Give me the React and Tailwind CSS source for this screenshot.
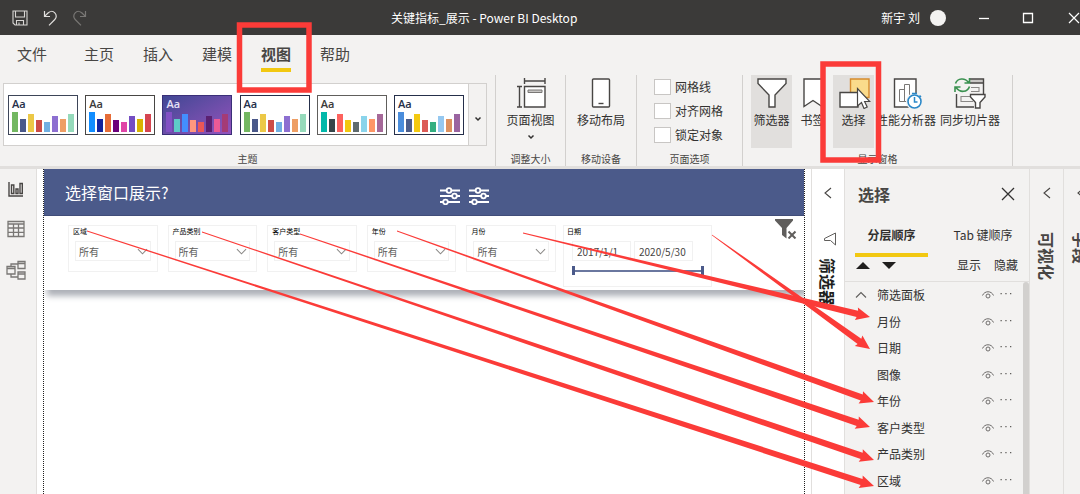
import { useState } from 'react';

const tabs = ['主页', '插入', '建模', '视图', '帮助'];

const themes = [
    { frame: 'border-[#3d4558] bg-white', text: 'text-[#252f4a]', bars: ['#73b761', '#4a588a', '#ecc846', '#cd4c46', '#71afe2', '#8d6fd1', '#ee9e64', '#95dabb'] },
    { frame: 'border-[#484644] bg-white', text: 'text-[#3b3a39]', bars: ['#118dff', '#12239e', '#e66c37', '#6b007b', '#e044a7', '#744ec2', '#d9b300', '#d64550'] },
    { frame: 'border-[#3a2f78] bg-linear-to-br from-[#3f4794] to-[#9452bd]', text: 'text-[#e6e0f5]', bars: ['#8250c4', '#5ecbc8', '#438fff', '#ff977e', '#eb5757', '#5b2071', '#ec5a96', '#a43b76'] },
    { frame: 'border-[#252f4a] bg-white', text: 'text-[#252f4a]', bars: ['#73b761', '#4a588a', '#ecc846', '#cd4c46', '#71afe2', '#8d6fd1', '#ee9e64', '#95dabb'] },
    { frame: 'border-[#605e5c] bg-white', text: 'text-[#3b3a39]', bars: ['#01b8aa', '#374649', '#fd625e', '#f2c80f', '#5f6b6d', '#8ad4eb', '#fe9666', '#a66999'] },
    { frame: 'border-[#252f4a] bg-white', text: 'text-[#252f4a]', bars: ['#4a8ddc', '#4c5d8a', '#f3c911', '#dc5b57', '#33ae81', '#95c8f0', '#dd915f', '#9a64a0'] },
];

const barHeights = [20, 13, 18, 12, 10, 16, 13, 18];

const slicers = ['区域', '产品类别', '客户类型', '年份', '月份'];

const layers = ['月份', '日期', '图像', '年份', '客户类型', '产品类别', '区域'];

const arrows = [
    [87, 231, 874, 486],
    [202, 232, 874, 460],
    [300, 234, 870, 427],
    [397, 231, 874, 402],
    [523, 233, 870, 317],
    [712, 235, 870, 349],
];

// tapered arrow: thin tail, wide shaft end, triangular head
const arrowPoints = ([x1, y1, x2, y2]) => {
    const length = Math.hypot(x2 - x1, y2 - y1);
    const ux = (x2 - x1) / length;
    const uy = (y2 - y1) / length;
    const at = (distance, side) =>
        `${(x1 + ux * distance - uy * side).toFixed(1)},${(y1 + uy * distance + ux * side).toFixed(1)}`;
    const neck = length - 13;
    return [at(0, -0.4), at(neck, -3.2), at(neck - 1, -6.5), at(length, 0), at(neck - 1, 6.5), at(neck, 3.2), at(0, 0.4)].join(' ');
};

const Chevron = ({ d, className }) => (
    <svg viewBox="0 0 12 12" className={className} fill="none" stroke="currentColor" strokeWidth="1.1">
        <path d={d} />
    </svg>
);

const LEFT = 'M9 1L3 6l6 5';
const DOWN = 'M1 3.5l5 5 5-5';
const UP = 'M1 8.5l5-5 5 5';

const TitleBar = () => (
    <header className="flex h-[35px] shrink-0 items-center bg-[#3b3a39] text-xs text-white">
        <div className="flex w-[391px] items-center gap-[14px] pl-3">
            <button aria-label="保存">
                <svg viewBox="0 0 16 16" className="size-4" fill="none" stroke="#d8d6d4" strokeWidth="1.1">
                    <path d="M1 1h14v14H3l-2-2zM3.500 1v6h9V1M4.500 15v-4.500h7V15M7 12.500V15" />
                </svg>
            </button>
            <button aria-label="撤消">
                <svg viewBox="0 0 16 16" className="size-4" fill="none" stroke="#e1dfdd" strokeWidth="1.2">
                    <path d="M2.500 1v5.500H8M2.800 6.200L6 3c2-2 5-2 6.800-.2 1.900 1.900 1.900 4.800 0 6.700L7 15.300" />
                </svg>
            </button>
            <button aria-label="恢复">
                <svg viewBox="0 0 16 16" className="size-4" fill="none" stroke="#797775" strokeWidth="1.2">
                    <path d="M13.500 1v5.500H8M13.200 6.200L10 3C8 1 5 1 3.200 2.800c-1.900 1.900-1.900 4.800 0 6.700L9 15.300" />
                </svg>
            </button>
        </div>
        <h1>关键指标_展示 - Power BI Desktop</h1>
        <div className="ml-auto flex items-center">
            <span>新宇 刘</span>
            <span className="ml-[10px] size-4 rounded-full bg-[#f3f2f1]" />
            <button aria-label="最小化" className="ml-8">
                <svg viewBox="0 0 12 12" className="size-3" stroke="white" strokeWidth="1.3"><path d="M1 6.500h10" /></svg>
            </button>
            <button aria-label="最大化" className="ml-8">
                <svg viewBox="0 0 12 12" className="size-3" fill="none" stroke="white" strokeWidth="1.300"><path d="M1.500 1.500h9v9h-9z" /></svg>
            </button>
            <button aria-label="关闭" className="ml-[34px]">
                <svg viewBox="0 0 12 12" className="size-3" stroke="white" strokeWidth="1.200"><path d="M1 1l10 10M11 1L1 11" /></svg>
            </button>
        </div>
    </header>
);

const ThemeCard = ({ theme }) => (
    <button aria-label="主题" className={`flex h-10 w-[70px] flex-col items-start justify-between border px-[3px] pb-[3px] ${theme.frame}`}>
        <span className={`font-['Open_Sans'] text-[11px] leading-4 font-semibold ${theme.text}`}>Aa</span>
        <span className="flex h-5 w-full items-end justify-between">
            {theme.bars.map((color, i) => (
                <span key={i} className="w-[6px]" style={{ height: barHeights[i], background: color }} />
            ))}
        </span>
    </button>
);

const Group = ({ label, className, children }) => (
    <section className={`flex shrink-0 flex-col border-r border-[#d2d0ce] ${className}`}>
        <div className="flex flex-1">{children}</div>
        <p className="h-[14px] text-center text-[10px] leading-[14px] text-[#484644]">{label}</p>
    </section>
);

const SmallChevron = ({ className }) => (
    <svg viewBox="0 0 8 8" className={`size-2 ${className}`} fill="none" stroke="currentColor" strokeWidth="1.5">
        <path d="M1.500 2.500L4 5l2.500-2.500" />
    </svg>
);

const RibbonButton = ({ icon, label, dropdown, className }) => (
    <button className={`flex h-[73px] shrink-0 flex-col items-center pt-[2px] text-xs whitespace-nowrap text-[#323130] ${className}`}>
        <svg viewBox="0 0 34 32" className="h-8 w-[34px]" fill="white" stroke="#484644" strokeWidth="1.4">{icon}</svg>
        <span className="mt-[2px] leading-[18px]">{label}</span>
        {dropdown && <SmallChevron className="mt-1" />}
    </button>
);

const icons = {
    pageView: (
        <>
            <path d="M10.500 9.500h20.500v20.500h-20.500z" />
            <path d="M14 13h14v2.500H14z" fill="#c8c6c4" stroke="#797775" strokeWidth="1" />
            <path d="M10.500 4h20.500M10.500 1v6M31 1v6M5.500 9.500V30M3 9.500h5M3 30h5" fill="none" />
        </>
    ),
    mobile: (
        <>
            <rect x="8.500" y="2" width="17" height="28" rx="1" />
            <path d="M14.500 26.500h5" />
        </>
    ),
    filter: <path d="M3 2h28v4.500L20 18v12h-6V18L3 6.500z" />,
    bookmark: <path d="M8 2h18v27.500l-9-6-9 6z" />,
    selection: (
        <>
            <path d="M13.500 2H32v18.500H13.500z" fill="#fadb8b" stroke="#d68c2e" />
            <path d="M3 15.500h18v14.500H3z" />
            <path d="M20.500 11.500v17.500l4-3.500 2.500 6 3.200-1.500-2.600-5.500h5.200z" strokeWidth="1.200" />
        </>
    ),
    performance: (
        <>
            <path d="M5.500 2h21.500v28H5.500z" />
            <path d="M10.500 12.500h5v12h-5zM15.500 7.500h5v17h-5z" strokeWidth="1" stroke="#797775" />
            <circle cx="25.500" cy="24.500" r="8.500" fill="#f3f2f1" stroke="none" />
            <circle cx="25.500" cy="24.500" r="6.500" stroke="#2b88c8" strokeWidth="1.600" />
            <path d="M23 16.500h5M25.500 20v5h3M30.500 18.500l1.500 1.500" fill="none" stroke="#2b88c8" strokeWidth="1.500" />
        </>
    ),
    sync: (
        <>
            <path d="M18 2h12.500v16H3.500V30H21" fill="none" stroke="none" />
            <path d="M17 2.500h13V6H17z" fill="#c8c6c4" stroke="none" />
            <path d="M16.500 2h14v16M17 6h13.500M3.500 17v13H21" fill="none" />
            <path d="M18 10.500h8v4H18M19 19.500H8v5h12" fill="none" stroke="#8a8886" strokeWidth="1.100" />
            <path d="M17.500 17.500h14.500v2.500l-5 5.500V31h-4.500v-5.500l-5-5.500z" />
            <g fill="none" stroke="#3a9150" strokeWidth="1.600">
                <path d="M2.500 6.500C4.500 1 12 .5 15.500 5.500M16.500 1v5h-5M16.500 9.500C14.500 15.500 7 16 3 10.500M2 15V10h5.500" />
            </g>
        </>
    ),
};

const Ribbon = () => (
    <div className="flex h-[91px] shrink-0">
        <Group label="主题" className="w-[496px]">
            <div className="mt-2 ml-[3px] flex h-[63px] w-[484px] border border-[#d2d0ce] bg-white">
                <div className="flex flex-1 items-center justify-between px-1">
                    {themes.map((theme, i) => <ThemeCard key={i} theme={theme} />)}
                </div>
                <button aria-label="更多主题" className="flex w-[18px] items-center justify-center border-l border-[#d2d0ce] bg-[#f3f2f1] text-[#323130]">
                    <SmallChevron className="mt-2" />
                </button>
            </div>
        </Group>
        <Group label="调整大小" className="w-[70px]">
            <RibbonButton icon={icons.pageView} label="页面视图" dropdown className="w-full" />
        </Group>
        <Group label="移动设备" className="w-[71px]">
            <RibbonButton icon={icons.mobile} label="移动布局" className="w-full" />
        </Group>
        <Group label="页面选项" className="w-[106px]">
            <div className="flex flex-col gap-2 pt-1 pl-[17px]">
                {['网格线', '对齐网格', '锁定对象'].map((name) => (
                    <label key={name} className="flex items-center gap-1 text-xs leading-4 text-[#323130]">
                        <input type="checkbox" className="h-4 w-[17px] appearance-none border border-[#c8c6c4] bg-white checked:bg-[#605e5c]" />
                        {name}
                    </label>
                ))}
            </div>
        </Group>
        <Group label="显示窗格" className="w-[270px]">
            <div className="flex pl-2">
                <RibbonButton icon={icons.filter} label="筛选器" className="w-[41px] bg-[#e1dfdd]" />
                <RibbonButton icon={icons.bookmark} label="书签" className="w-[41px]" />
                <RibbonButton icon={icons.selection} label="选择" className="w-[41px] bg-[#e1dfdd]" />
                <RibbonButton icon={icons.performance} label="性能分析器" className="w-16" />
                <RibbonButton icon={icons.sync} label="同步切片器" className="w-16" />
            </div>
        </Group>
    </div>
);

const ViewRail = () => (
    <nav className="flex w-[37px] shrink-0 flex-col items-center gap-[22px] border-r border-[#e1dfdd] bg-[#f3f2f1] pt-[11px] pr-1">
        <button aria-label="报表">
            <svg viewBox="0 0 18 18" className="size-[18px]" fill="none" stroke="#484644" strokeWidth="1.400">
                <path d="M2 2v14h14M4.500 5h2.300v8.500H4.500zM9 9h2v4.500H9zM13 3.500h2.300v10H13z" />
            </svg>
        </button>
        <button aria-label="数据">
            <svg viewBox="0 0 18 18" className="size-[18px]" fill="none" stroke="#797775" strokeWidth="1.300">
                <path d="M1 1.500h16v15H1zM1 4h16M1 8h16M1 12.300h16M6.500 4v12.500M11.500 4v12.500" />
            </svg>
        </button>
        <button aria-label="模型">
            <svg viewBox="0 0 20 20" className="size-5" fill="none" stroke="#797775" strokeWidth="1.300">
                <path d="M1 6.500h8v7.500H1zM1 8.500h8M12 1.500h7v7h-7zM12 3.500h7M12 12h7v7h-7zM12 14h7M5 6.500V4h7M5 14v3h7" />
            </svg>
        </button>
    </nav>
);

const Slicer = ({ label }) => (
    <label className="flex h-[47px] flex-col border border-[#f1f1f1] px-1">
        <span className="h-[15px] text-[7px] leading-[11px] text-black">{label}</span>
        <span className="relative mx-[2px] block h-5 border border-[#f1f1f1]">
            <select className="block h-full w-full appearance-none bg-transparent pl-[3px] text-[10px] text-[#605e5c]">
                <option>所有</option>
            </select>
            <Chevron d={DOWN} className="pointer-events-none absolute top-1 right-[2px] size-[11px] text-[#8a8886]" />
        </span>
    </label>
);

const sliderClass =
    'pointer-events-none absolute inset-0 h-[9px] w-full appearance-none bg-transparent [&::-webkit-slider-thumb]:h-[9px] [&::-webkit-slider-thumb]:w-[3px] [&::-webkit-slider-thumb]:appearance-none [&::-webkit-slider-thumb]:bg-[#4b5a8a]';

const dateClass = 'h-5 w-[59px] border border-[#f1f1f1] px-1 text-[10px] text-[#484644]';

const DateSlicer = () => (
    <fieldset className="h-[62px] w-[149px] border border-[#f1f1f1] px-[3px]">
        <div className="h-[15px] text-[7px] leading-[11px] text-black">日期</div>
        <div className="flex gap-[3px] pl-[5px]">
            <input aria-label="开始日期" defaultValue="2017/1/1" className={dateClass} />
            <input aria-label="结束日期" defaultValue="2020/5/30" className={dateClass} />
        </div>
        <div className="relative mt-[5px] ml-[5px] flex h-[9px] w-[132px] items-center">
            <div className="h-[2px] w-full bg-[#6a779f]" />
            <input type="range" aria-label="最早" defaultValue="0" className={sliderClass} />
            <input type="range" aria-label="最晚" defaultValue="100" className={sliderClass} />
        </div>
    </fieldset>
);

const SlidersIcon = () => (
    <svg viewBox="0 0 20 18" className="h-[18px] w-5" fill="#4b5a8a" stroke="white" strokeWidth="1.800">
        <path d="M0 3.500h20M0 9h20M0 15h20" />
        <circle cx="9" cy="3.500" r="2.300" />
        <circle cx="14.500" cy="9" r="2.300" />
        <circle cx="5.500" cy="15" r="2.300" />
    </svg>
);

const Canvas = () => (
    <main className="flex min-w-0 flex-1 bg-white px-[6px]">
        <div className="flex-1 overflow-hidden border-x border-dotted border-[#201f1e]">
            <div className="flex h-[47px] items-center border-b border-[#3f4c78] bg-[#4b5a8a] pl-[21px] text-white">
                <h2 className="w-[375px] text-base">选择窗口展示?</h2>
                <div className="flex gap-[9px] pt-2">
                    <button aria-label="显示筛选"><SlidersIcon /></button>
                    <button aria-label="隐藏筛选"><SlidersIcon /></button>
                </div>
            </div>
            <div className="flex h-[74px] items-start bg-white pt-[9px] pl-6 shadow-[3px_6px_6px_#aeb1b8]">
                <div className="grid w-[488px] shrink-0 grid-cols-5 gap-[10px]">
                    {slicers.map((name) => <Slicer key={name} label={name} />)}
                </div>
                <div className="ml-[7px] shrink-0"><DateSlicer /></div>
                <button aria-label="清除筛选" className="-mt-[6px] mr-[7px] ml-auto">
                    <svg viewBox="0 0 22 20" className="h-5 w-[22px]">
                        <path d="M0 0h18v1.500L11.500 9v10.500L7 16V9L0 1.500z" fill="#605e5c" />
                        <path d="M13.500 12.500l7 7M20.500 12.500l-7 7" stroke="#605e5c" strokeWidth="2" />
                    </svg>
                </button>
            </div>
        </div>
    </main>
);

const CollapsedPane = ({ label, className, textClass, children }) => (
    <aside className={`flex shrink-0 flex-col items-center border-l border-[#e1dfdd] ${className}`}>
        <button aria-label="展开" className="mt-[18px] text-[#484644]"><Chevron d={LEFT} className="size-3" /></button>
        {children}
        <h3 className={`text-base leading-5 font-bold whitespace-nowrap [text-orientation:sideways] [writing-mode:vertical-rl] ${textClass}`}>{label}</h3>
    </aside>
);

const RowActions = () => (
    <span className="ml-auto flex items-center gap-[6px]">
        <button aria-label="可见性">
            <svg viewBox="0 0 12 10" className="h-[10px] w-3" fill="none" stroke="#605e5c" strokeWidth="0.900">
                <path d="M0.500 5.500C2.500 .5 9.500 .5 11.500 5.500" />
                <circle cx="6" cy="6" r="2" />
            </svg>
        </button>
        <button aria-label="更多">
            <svg viewBox="0 0 12 10" className="h-[10px] w-3" fill="#605e5c">
                <path d="M0.500 3h1.300v1.300H.5zM5.300 3h1.300v1.300H5.300zM10 3h1.300v1.300H10z" />
            </svg>
        </button>
    </span>
);

const SelectionPane = () => {
    const [active, setActive] = useState('layer');
    const bar = (name) => (active === name ? 'border-[#f2c811] font-bold' : 'border-transparent');

    return (
        <aside className="flex w-[185px] shrink-0 flex-col border-l border-[#e1dfdd] bg-[#f3f2f1] text-xs text-[#323130]">
            <div className="flex h-[50px] items-center justify-between pr-[14px] pl-[13px]">
                <h3 className="text-base font-bold text-[#484644]">选择</h3>
                <button aria-label="关闭窗格">
                    <svg viewBox="0 0 14 14" className="size-[14px]" stroke="#323130" strokeWidth="1.300"><path d="M1 1l12 12M13 1L1 13" /></svg>
                </button>
            </div>
            <div className="flex pt-[6px] pl-[10px]">
                <button onClick={() => setActive('layer')} className={`h-8 w-[73px] border-b-4 pb-[9px] whitespace-nowrap ${bar('layer')}`}>分层顺序</button>
                <button onClick={() => setActive('tab')} className={`ml-[18px] h-8 w-[74px] border-b-4 pb-[9px] whitespace-nowrap ${bar('tab')}`}>Tab 键顺序</button>
            </div>
            <div className="flex h-[25px] items-center border-b border-[#e1dfdd] pr-[11px] pb-2 pl-[11px]">
                <button aria-label="上移"><svg viewBox="0 0 14 7" className="h-[7px] w-[14px]"><path d="M0 7l7-7 7 7z" fill="#201f1e" /></svg></button>
                <button aria-label="下移" className="ml-3"><svg viewBox="0 0 14 7" className="h-[7px] w-[14px]"><path d="M0 0l7 7 7-7z" fill="#201f1e" /></svg></button>
                <button className="ml-auto">显示</button>
                <button className="ml-[13px]">隐藏</button>
            </div>
            <div className="flex">
                <ul className="grid h-[212px] flex-1 grid-rows-8 pr-[11px]">
                    <li className="flex items-center pl-[10px]">
                        <Chevron d={UP} className="size-3 text-[#605e5c]" />
                        <span className="ml-[10px]">筛选面板</span>
                        <RowActions />
                    </li>
                    {layers.map((name) => (
                        <li key={name} className="flex items-center pl-8">
                            {name}
                            <RowActions />
                        </li>
                    ))}
                </ul>
                <div className="w-[6px] rounded-t bg-[#d2d0ce]" />
            </div>
        </aside>
    );
};

const App = () => {
    return (
        <div className="relative flex h-screen flex-col overflow-hidden bg-[#f3f2f1] font-['Noto_Sans_CJK_SC',sans-serif]">
            <TitleBar />
            <nav className="flex h-10 shrink-0 items-start gap-[29px] pl-[17px] text-[15px] leading-[22px] text-[#484644]">
                <button className="mt-2 mr-2">文件</button>
                {tabs.map((name) => (
                    <button key={name} className={`mt-2 h-[29px] border-b-4 pb-[3px] ${name === '视图' ? 'border-[#f2c811] font-bold' : 'border-transparent'}`}>
                        {name}
                    </button>
                ))}
            </nav>
            <Ribbon />
            <div className="flex min-h-0 flex-1 border-t-3 border-[#e1dfdd]">
                <ViewRail />
                <Canvas />
                <CollapsedPane label="筛选器" className="w-[33px] bg-white" textClass="mt-3 text-[#201f1e]">
                    <svg viewBox="0 0 14 14" className="mt-[33px] ml-1 size-[14px]" fill="none" stroke="#605e5c">
                        <path d="M12.500 1v12L7.500 8.500H1.500v-2L12.500 1z" />
                    </svg>
                </CollapsedPane>
                <SelectionPane />
                <CollapsedPane label="可视化" className="w-[34px]" textClass="mt-[33px] text-[#484644]" />
                <div className="w-[17px] shrink-0">
                    <CollapsedPane label="字段" className="h-full w-[34px]" textClass="mt-[33px] text-[#484644]" />
                </div>
            </div>

            {/* red markup on top of the window */}
            <svg className="pointer-events-none absolute top-0 left-0" width="1080" height="494" fill="none">
                <g stroke="#fb3b38" strokeWidth="5.500">
                    <rect x="239.500" y="25" width="69.500" height="65" />
                    <rect x="823" y="64" width="55.500" height="96" />
                </g>
                {arrows.map((arrow) => (
                    <polygon key={arrow.join()} points={arrowPoints(arrow)} fill="#fb3b38" />
                ))}
            </svg>
        </div>
    );
};

export default App;
